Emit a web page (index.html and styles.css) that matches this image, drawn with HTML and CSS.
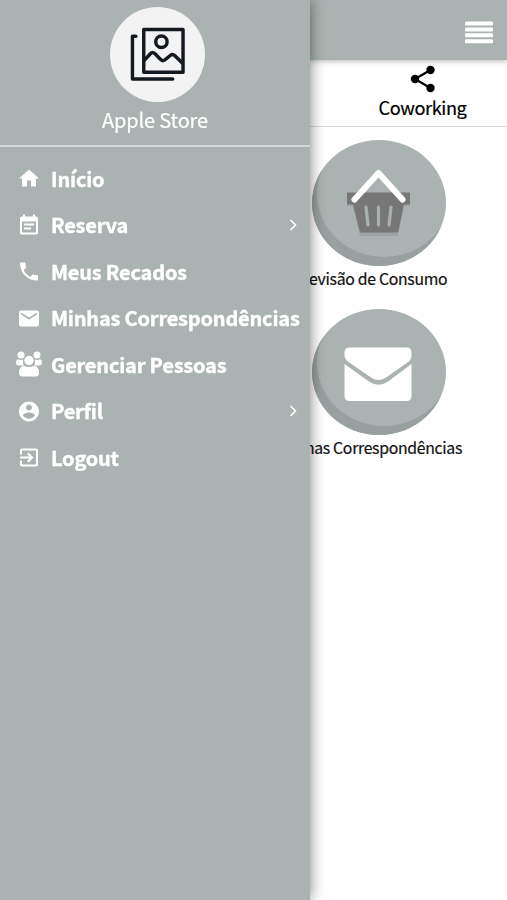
FILE: index.html
```html
<!DOCTYPE html>
<html lang="pt-BR">
<head>
    <meta charset="UTF-8">
    <meta name="viewport" content="width=device-width, initial-scale=1.0">
    <title>Apple Store</title>
    <link rel="stylesheet" href="styles.css">
</head>
<body>
<header class="topbar">
    <svg class="burger" viewBox="0 0 28 23"><path d="M1.500 2.500h25M1.500 8.500h25M1.500 14.300h25M1.500 20.200h25" fill="none" stroke="#fff" stroke-width="4" stroke-linecap="round"/></svg>
</header>

<nav class="tabs">
    <div class="tab">
        <svg class="share" viewBox="0 0 26 28"><path d="M20.500 5L5 14l15.500 9" fill="none" stroke="#000" stroke-width="2.300"/><circle cx="20.500" cy="5" r="4.200"/><circle cx="5" cy="14" r="4.200"/><circle cx="20.500" cy="23" r="4.200"/></svg>
        <span>Coworking</span>
    </div>
</nav>

<main class="cards">
    <div class="card">
        <div class="disc">
            <svg viewBox="0 0 134 126">
                <path d="M35 54h63v12h-6l-6 30H48l-7-30h-6z" fill="#9ba4a2"/>
                <path d="M35 52.500h63v12h-6l-6 28H48l-7-28h-6z" fill="#777"/>
                <path d="M54 67l2 18M66.500 67v18M79 67l-2 18" fill="none" stroke="#a9b2b0" stroke-width="3.200" stroke-linecap="round"/>
                <path d="M42.500 59.500L66.500 33l24 26.500" fill="none" stroke="#fff" stroke-width="6" stroke-linecap="round" stroke-linejoin="round"/>
            </svg>
        </div>
        <p>Previsão de Consumo</p>
    </div>
    <div class="card">
        <div class="disc">
            <svg viewBox="0 0 134 126">
                <path d="M37.500 38.500h57q5 0 5 5v3q0 4-4 7L74 68.500q-8 5-15 0L36.500 53q-4-3-4-7v-2.500q0-5 5-5z" fill="#fff"/>
                <path d="M32.500 55L57 72.500q9.500 6.500 19 0L99.500 55v32q0 5-5 5h-57q-5 0-5-5z" fill="#fff"/>
            </svg>
        </div>
        <p>Minhas Correspondências</p>
    </div>
</main>

<aside class="drawer">
    <div class="profile">
        <div class="avatar">
            <svg viewBox="0 0 56 56" fill="none" stroke="#141920" stroke-width="3.500" stroke-linecap="round" stroke-linejoin="round">
                <path d="M14 2.500h40v43.500H14zM6 9.500H2.500V53h41"/>
                <circle cx="32" cy="15" r="5.800"/>
                <path d="M14.500 34l6.500-7q2-2 4.200 0l6 6q2 2.200 4.300.5l5.500-4.500q2.300-2 4.500 0l8 8"/>
            </svg>
        </div>
        <h2>Apple Store</h2>
    </div>
    <ul class="menu">
        <li>
            <svg class="icon" viewBox="0 0 24 24"><path d="M10 20v-6h4v6h5v-8h3L12 3 2 12h3v8z"/></svg>
            <span>Início</span>
        </li>
        <li>
            <svg class="icon" viewBox="0 0 24 24"><path d="M17 10H7v2h10v-2zm2-7h-1V1h-2v2H8V1H6v2H5c-1.110 0-1.990.9-1.990 2L3 19c0 1.100.89 2 2 2h14c1.100 0 2-.9 2-2V5c0-1.100-.9-2-2-2zm0 16H5V8h14v11zm-5-5H7v2h7v-2z"/></svg>
            <span>Reserva</span>
            <svg class="arrow" viewBox="0 0 8 12"><path d="M1.500 1l5 5-5 5"/></svg>
        </li>
        <li>
            <svg class="icon" viewBox="0 0 24 24"><path d="M6.620 10.790c1.440 2.830 3.760 5.140 6.590 6.590l2.200-2.200c.27-.27.67-.36 1.020-.24 1.120.37 2.330.57 3.570.57.55 0 1 .45 1 1V20c0 .55-.45 1-1 1-9.390 0-17-7.610-17-17 0-.55.45-1 1-1h3.500c.55 0 1 .45 1 1 0 1.250.2 2.450.57 3.570.11.35.03.74-.25 1.020l-2.200 2.200z"/></svg>
            <span>Meus Recados</span>
        </li>
        <li>
            <svg class="icon" viewBox="0 0 24 24"><path d="M20 4H4c-1.100 0-1.990.9-1.990 2L2 18c0 1.100.9 2 2 2h16c1.100 0 2-.9 2-2V6c0-1.100-.9-2-2-2zm0 4l-8 5-8-5V6l8 5 8-5v2z"/></svg>
            <span>Minhas Correspondências</span>
        </li>
        <li>
            <svg class="icon people" viewBox="0 0 28 26"><circle cx="6" cy="4" r="3.500"/><circle cx="22" cy="4" r="3.500"/><path d="M3 8.300q2.500 1.300 5.200.3-.7 3.400.6 5.900H4Q.7 14.500 1 11q.3-2.700 2-2.700zM25 8.300q-2.500 1.300-5.200.3.700 3.400-.6 5.900H24q3.300 0 3-3.500-.3-2.700-2-2.700z"/><circle cx="14" cy="9.500" r="4.700"/><path d="M8.800 14.800q5.200 2.600 10.400 0 4.800.7 4.800 7.200 0 3.500-3.500 3.500h-13Q4 25.500 4 22q0-6.500 4.800-7.200z"/></svg>
            <span>Gerenciar Pessoas</span>
        </li>
        <li>
            <svg class="icon" viewBox="0 0 24 24"><path d="M12 2C6.480 2 2 6.480 2 12s4.480 10 10 10 10-4.480 10-10S17.520 2 12 2zm0 3c1.660 0 3 1.340 3 3s-1.340 3-3 3-3-1.340-3-3 1.340-3 3-3zm0 14.200c-2.500 0-4.710-1.280-6-3.220.03-1.990 4-3.080 6-3.080 1.990 0 5.970 1.090 6 3.080-1.290 1.940-3.500 3.220-6 3.220z"/></svg>
            <span>Perfil</span>
            <svg class="arrow" viewBox="0 0 8 12"><path d="M1.500 1l5 5-5 5"/></svg>
        </li>
        <li>
            <svg class="icon" viewBox="0 0 24 24"><path d="M10.090 15.590L11.500 17l5-5-5-5-1.410 1.410L12.670 11H3v2h9.670l-2.580 2.590zM19 3H5c-1.110 0-2 .9-2 2v4h2V5h14v14H5v-4H3v4c0 1.100.89 2 2 2h14c1.100 0 2-.9 2-2V5c0-1.100-.9-2-2-2z"/></svg>
            <span>Logout</span>
        </li>
    </ul>
</aside>
</body>
</html>
```
FILE: styles.css
```css
* {
    box-sizing: border-box;
}
html, body {
    height: 100%;
    margin: 0;
    overflow: hidden;
    background: #fff;
    color: #111;
    font-family: "Noto Sans CJK JP", "Noto Sans", sans-serif;
}
svg {
    display: block;
}
.topbar {
    height: 60px;
    padding: 4px 14px 0 0;
    display: flex;
    align-items: center;
    justify-content: flex-end;
    background: #aab3b1;
    box-shadow: 0 1px 6px rgba(0, 0, 0, 0.3);
}
.burger {
    width: 28px;
    height: 23px;
}
.tabs {
    height: 67px;
    display: flex;
    justify-content: flex-end;
    border-bottom: 1px solid #d9d9d9;
}
.tab {
    width: 169px;
    padding-top: 5px;
    display: flex;
    flex-direction: column;
    align-items: center;
    font-size: 18.2px;
    letter-spacing: -0.4px;
    line-height: 28px;
    color: #000;
    -webkit-text-stroke: 0.2px #000;
}
.share {
    width: 26px;
    height: 28px;
}
.cards {
    width: 134px;
    margin-left: 312px;
    padding-top: 13px;
}
.card {
    height: 169px;
    display: flex;
    flex-direction: column;
    align-items: center;
}
.card p {
    margin: 0 17px 0 0;
    font-size: 15.8px;
    letter-spacing: -0.3px;
    line-height: 25px;
    white-space: nowrap;
    -webkit-text-stroke: 0.2px #111;
}
.disc {
    width: 134px;
    height: 126px;
    border-radius: 50%;
    background: #aab3b1;
    box-shadow: inset 5px -9px 0 #98a19f;
}

/* side menu over the page */
.drawer {
    position: fixed;
    top: 0;
    left: 0;
    width: 310px;
    height: 100%;
    background: #aab3b1;
    color: #fff;
    box-shadow: 0 0 14px rgba(0, 0, 0, 0.5);
}
.profile {
    height: 147px;
    padding-top: 7px;
    display: flex;
    flex-direction: column;
    align-items: center;
    border-bottom: 2px solid #d3d9d8;
}
.avatar {
    width: 95px;
    height: 95px;
    display: flex;
    align-items: center;
    justify-content: center;
    margin-left: 4px;
    border-radius: 50%;
    background: #f3f3f4;
}
.avatar svg {
    width: 55px;
    height: 55px;
}
.profile h2 {
    margin: 3px 0 0;
    font-size: 20px;
    font-weight: normal;
    letter-spacing: -0.15px;
    line-height: 30px;
    -webkit-text-stroke: 0.2px #fff;
}
.menu {
    margin: 0;
    padding: 8px 0 0 17px;
    list-style: none;
}
.menu li {
    height: 46.5px;
    padding-right: 13px;
    display: flex;
    align-items: center;
    gap: 10px;
    font-size: 20px;
    font-weight: bold;
    letter-spacing: -0.2px;
    white-space: nowrap;
    -webkit-text-stroke: 0.4px #fff;
}
.icon {
    flex: none;
    width: 24px;
    height: 25px;
    margin-top: 1px;
    fill: #fff;
}
.people {
    width: 28px;
    height: 26px;
    margin: 0 -2px;
}
.arrow {
    width: 8px;
    height: 12px;
    margin-left: auto;
    fill: none;
    stroke: #fff;
    stroke-width: 1.6;
}
```
